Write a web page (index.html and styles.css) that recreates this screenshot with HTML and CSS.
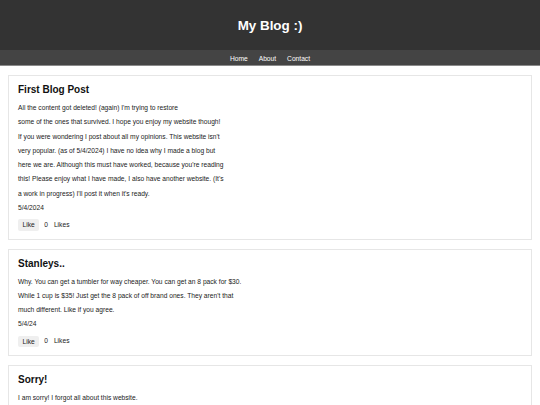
FILE: index.html
```html
<!DOCTYPE html>
<html lang="en">
<head>
<meta charset="utf-8">
<title>My Blog :)</title>
<link rel="stylesheet" href="styles.css">
</head>
<body>
<header class="site-header">
  <h1 class="site-title">My Blog :)</h1>
</header>
<nav class="site-nav">
  <a href="#">Home</a>
  <a href="#">About</a>
  <a href="#">Contact</a>
</nav>
<main class="posts">
  <article class="post">
    <h2 class="post-title">First Blog Post</h2>
    <p class="post-body">All the content got deleted! (again) I'm trying to restore<br>some of the ones that survived. I hope you enjoy my website though!<br>If you were wondering I post about all my opinions. This website isn't<br>very popular. (as of 5/4/2024) I have no idea why I made a blog but<br>here we are. Although this must have worked, because you're reading<br>this! Please enjoy what I have made, I also have another website. (It's<br>a work in progress) I'll post it when it's ready.</p>
    <p class="post-date">5/4/2024</p>
    <div class="likes"><button class="like-btn">Like</button><span class="like-count">0</span><span>Likes</span></div>
  </article>
  <article class="post">
    <h2 class="post-title">Stanleys..</h2>
    <p class="post-body">Why. You can get a tumbler for way cheaper. You can get an 8 pack for $30.<br>While 1 cup is $35! Just get the 8 pack of off brand ones. They aren't that<br>much different. Like if you agree.</p>
    <p class="post-date">5/4/24</p>
    <div class="likes"><button class="like-btn">Like</button><span class="like-count">0</span><span>Likes</span></div>
  </article>
  <article class="post">
    <h2 class="post-title">Sorry!</h2>
    <p class="post-body">I am sorry! I forgot all about this website.</p>
  </article>
</main>
</body>
</html>
```
FILE: styles.css
```css
html, body {
  margin: 0;
  padding: 0;
  background: #ffffff;
  font-family: "Liberation Sans", Arial, sans-serif;
  color: #222;
}

.site-header {
  background: #333333;
  height: 50px;
  display: flex;
  align-items: center;
  justify-content: center;
}

.site-title {
  margin: 0;
  color: #ffffff;
  font-size: 13.4px;
  font-weight: bold;
  line-height: 16px;
  padding-top: 1px;
}

.site-nav {
  background: #444444;
  height: 15px;
  border-bottom: 1px solid #8a8a8a;
  display: flex;
  justify-content: center;
  align-items: center;
  gap: 11px;
}

.site-nav a {
  color: #ffffff;
  text-decoration: none;
  font-size: 6.67px;
  line-height: 8px;
  padding-top: 2px;
}

.posts {
  display: flex;
  flex-direction: column;
  gap: 9px;
  padding: 9px 8px 0;
}

.post {
  border: 1px solid #e6e6e6;
  padding: 8px 9px;
}

.post-title {
  margin: 0 0 5px;
  font-size: 10px;
  line-height: 12px;
  font-weight: bold;
  color: #111;
}

.post-body,
.post-date {
  margin: 0;
  font-size: 6.67px;
  line-height: 14.25px;
}

.likes {
  margin-top: 4px;
  display: flex;
  align-items: center;
  gap: 5px;
  font-size: 6.67px;
  line-height: 8px;
}

.like-btn {
  font-family: inherit;
  font-size: 6.67px;
  color: #222;
  background: #efefef;
  border: none;
  border-radius: 2px;
  height: 11.5px;
  padding: 0 4.5px;
  margin-right: 0;
}

.like-count {
  margin-right: 1px;
}
```
